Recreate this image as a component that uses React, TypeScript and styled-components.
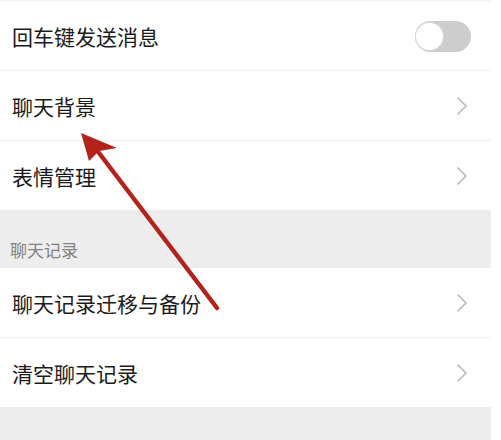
import React from 'react';
import styled, { createGlobalStyle } from 'styled-components';

const GlobalStyle = createGlobalStyle`
    html, body {
        margin: 0;
        padding: 0;
        background: #ffffff;
    }
    body {
        font-family: "Noto Sans CJK SC", "Noto Sans", sans-serif;
    }
`;

const Page = styled.div`
    position: relative;
    width: 491px;
    height: 440px;
    background: #ededed;
    overflow: hidden;
    border-top: 1px solid #f3f3f3;
    box-sizing: border-box;
`;

const Group = styled.div`
    background: #ffffff;
`;

const Row = styled.div<{ $last?: boolean }>`
    height: ${p => (p.$last ? '69px' : '70px')};
    display: flex;
    align-items: center;
    justify-content: space-between;
    padding: 1px 20px 0 12px;
    box-sizing: border-box;
    border-bottom: ${p => (p.$last ? 'none' : '1px solid #f0f0f0')};
`;

const Label = styled.span`
    font-size: 21px;
    color: #1b1b1b;
`;

const SectionHeader = styled.div`
    height: 58px;
    box-sizing: border-box;
    padding: 27px 0 0 10px;
    font-size: 17px;
    color: #838383;
`;

const Track = styled.div`
    width: 56px;
    height: 31px;
    border-radius: 16px;
    background: #cdcdcd;
    position: relative;
`;

const Knob = styled.div`
    position: absolute;
    left: 1px;
    top: 2px;
    width: 27px;
    height: 27px;
    border-radius: 50%;
    background: #ffffff;
    box-shadow: 0 0 0 1px #d8d8d8;
`;

const ChevronBox = styled.svg`
    width: 12px;
    height: 18px;
    margin-right: 3px;
`;

const Overlay = styled.svg`
    position: absolute;
    left: 0;
    top: 0;
    pointer-events: none;
`;

const Chevron = () => (
    <ChevronBox viewBox="0 0 12 18" fill="none" stroke="#b8b8b8" strokeWidth="1.6" strokeLinecap="round" strokeLinejoin="round">
        <polyline points="2 1 10 9 2 17" />
    </ChevronBox>
);

const Toggle = () => (
    <Track>
        <Knob />
    </Track>
);

const App: React.FC = () => {
    return (
        <>
            <GlobalStyle />
            <Page>
                <Group>
                    <Row>
                        <Label>回车键发送消息</Label>
                        <Toggle />
                    </Row>
                    <Row>
                        <Label>聊天背景</Label>
                        <Chevron />
                    </Row>
                    <Row $last>
                        <Label>表情管理</Label>
                        <Chevron />
                    </Row>
                </Group>

                <SectionHeader>聊天记录</SectionHeader>

                <Group>
                    <Row>
                        <Label>聊天记录迁移与备份</Label>
                        <Chevron />
                    </Row>
                    <Row $last>
                        <Label>清空聊天记录</Label>
                        <Chevron />
                    </Row>
                </Group>

                {/* red annotation arrow drawn over the list */}
                <Overlay width="491" height="440" viewBox="0 0 491 440">
                    <line x1="217" y1="307" x2="96" y2="148" stroke="#b3221b" strokeWidth="4.5" strokeLinecap="round" />
                    <polygon points="81,132 117,147 99,150 89,160" fill="#b3221b" />
                </Overlay>
            </Page>
        </>
    );
};

export default App;
